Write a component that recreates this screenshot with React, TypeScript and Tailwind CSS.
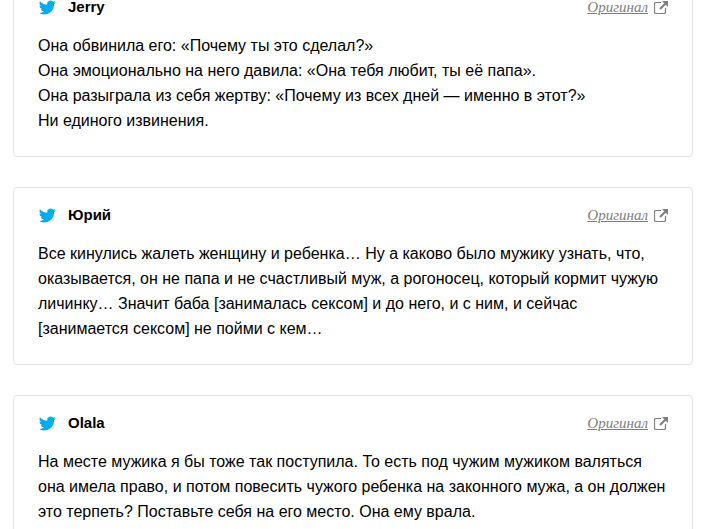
import type { ReactNode } from "react"

type Comment = {
  author: string
  href: string
  lines: string[]
}

const COMMENTS: Comment[] = [
  {
    author: "Jerry",
    href: "#jerry",
    lines: [
      "Она обвинила его: «Почему ты это сделал?»",
      "Она эмоционально на него давила: «Она тебя любит, ты её папа».",
      "Она разыграла из себя жертву: «Почему из всех дней — именно в этот?»",
      "Ни единого извинения.",
    ],
  },
  {
    author: "Юрий",
    href: "#yuriy",
    lines: [
      "Все кинулись жалеть женщину и ребенка… Ну а каково было мужику узнать, что, оказывается, он не папа и не счастливый муж, а рогоносец, который кормит чужую личинку… Значит баба [занималась сексом] и до него, и с ним, и сейчас [занимается сексом] не пойми с кем…",
    ],
  },
  {
    author: "Olala",
    href: "#olala",
    lines: [
      "На месте мужика я бы тоже так поступила. То есть под чужим мужиком валяться она имела право, и потом повесить чужого ребенка на законного мужа, а он должен это терпеть? Поставьте себя на его место. Она ему врала.",
    ],
  },
]

function TwitterIcon() {
  return (
    <svg viewBox="-1 0 25 24" className="h-[17px] w-[18px] fill-[#00aced]" aria-hidden="true">
      <path d="M23.954 4.569a10 10 0 0 1-2.825.775 4.958 4.958 0 0 0 2.163-2.723 9.99 9.99 0 0 1-3.127 1.184 4.92 4.92 0 0 0-8.384 4.482C7.691 8.094 4.066 6.13 1.64 3.161a4.822 4.822 0 0 0-.666 2.475c0 1.71.87 3.213 2.188 4.096a4.904 4.904 0 0 1-2.228-.616v.061a4.923 4.923 0 0 0 3.946 4.827 4.996 4.996 0 0 1-2.212.085 4.937 4.937 0 0 0 4.604 3.417 9.868 9.868 0 0 1-6.102 2.105c-.39 0-.779-.023-1.17-.067a13.995 13.995 0 0 0 7.557 2.209c9.054 0 13.999-7.496 13.999-13.986 0-.209 0-.42-.015-.63a9.936 9.936 0 0 0 2.46-2.548z" />
    </svg>
  )
}

function ExternalIcon() {
  return (
    <svg viewBox="0 0 14 14" className="h-3.5 w-3.5" aria-hidden="true">
      <path
        d="M7 2.500H2A1.500 1.500 0 0 0 .5 4v8A1.500 1.500 0 0 0 2 13.500h8A1.500 1.500 0 0 0 11.500 12V8"
        fill="none"
        stroke="currentColor"
        strokeWidth="1.2"
      />
      <path d="M6 9l5.500-5.500" fill="none" stroke="currentColor" strokeWidth="2.2" />
      <path d="M8 1h6v6z" fill="currentColor" />
    </svg>
  )
}

function CommentCard({ author, href, children }: { author: string; href: string; children: ReactNode }) {
  return (
    <article className="rounded border border-[#e3e3e3] px-6 pt-4 pb-[23px]">
      <header className="flex h-[22px] items-center justify-between">
        <div className="flex items-center gap-3">
          <TwitterIcon />
          <h2 className="text-[15px] leading-4 font-bold">{author}</h2>
        </div>
        <a href={href} className="flex items-center gap-1.5 text-[#808080]">
          <span className="font-['Liberation_Serif',serif] text-[15px] leading-4 italic underline">Оригинал</span>
          <ExternalIcon />
        </a>
      </header>
      <div className="mt-[15px] text-base leading-[25px]">{children}</div>
    </article>
  )
}

export default function App() {
  return (
    <main className="h-screen overflow-hidden bg-white pr-2 pl-[13px] font-['Liberation_Sans',Arial,sans-serif] text-black">
      {/* the list is scrolled partway into the first comment */}
      <div className="-mt-[21px] space-y-[30px]">
        {COMMENTS.map((comment) => (
          <CommentCard key={comment.author} author={comment.author} href={comment.href}>
            {comment.lines.map((line) => (
              <p key={line}>{line}</p>
            ))}
          </CommentCard>
        ))}
      </div>
    </main>
  )
}
